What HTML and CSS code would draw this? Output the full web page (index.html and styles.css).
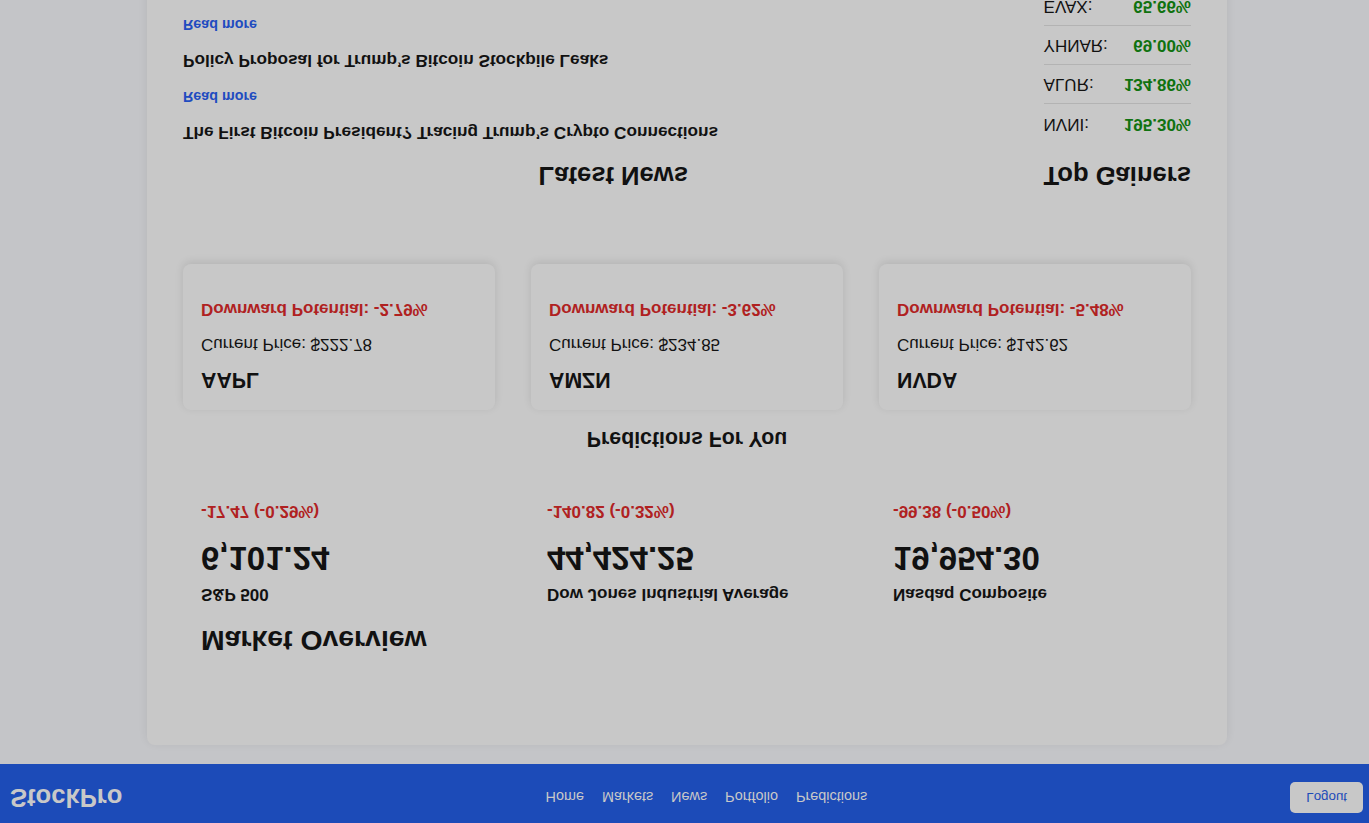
FILE: index.html
```html
<!DOCTYPE html>
<html lang="en">
<head>
<meta charset="utf-8">
<title>StockPro</title>
<link rel="stylesheet" href="styles.css">
</head>
<body>
<div class="screen">
  <header class="topbar">
    <div class="logo">StockPro</div>
    <nav class="nav">
      <a href="#">Home</a>
      <a href="#">Markets</a>
      <a href="#">News</a>
      <a href="#">Portfolio</a>
      <a href="#">Predictions</a>
    </nav>
    <button class="logout" type="button">Logout</button>
  </header>

  <main class="panel">
    <section class="market">
      <h2 class="market-title">Market Overview</h2>
      <div class="indices">
        <div class="index">
          <div class="index-name">S&amp;P 500</div>
          <div class="index-value">6,101.24</div>
          <div class="index-change">-17.47 (-0.29%)</div>
        </div>
        <div class="index">
          <div class="index-name">Dow Jones Industrial Average</div>
          <div class="index-value">44,424.25</div>
          <div class="index-change">-140.82 (-0.32%)</div>
        </div>
        <div class="index">
          <div class="index-name">Nasdaq Composite</div>
          <div class="index-value">19,954.30</div>
          <div class="index-change">-99.38 (-0.50%)</div>
        </div>
      </div>
    </section>

    <section class="predictions">
      <h3 class="pred-title">Predictions For You</h3>
      <div class="pred-grid">
        <div class="pred-card">
          <div class="pred-symbol">AAPL</div>
          <div class="pred-price">Current Price: $222.78</div>
          <div class="pred-potential">Downward Potential: -2.79%</div>
        </div>
        <div class="pred-card">
          <div class="pred-symbol">AMZN</div>
          <div class="pred-price">Current Price: $234.85</div>
          <div class="pred-potential">Downward Potential: -3.62%</div>
        </div>
        <div class="pred-card">
          <div class="pred-symbol">NVDA</div>
          <div class="pred-price">Current Price: $142.62</div>
          <div class="pred-potential">Downward Potential: -5.48%</div>
        </div>
      </div>
    </section>

    <div class="bottom">
      <section class="news">
        <h2 class="col-title">Latest News</h2>
        <article class="news-item">
          <div class="news-title">The First Bitcoin President? Tracing Trump’s Crypto Connections</div>
          <a class="read-more" href="#">Read more</a>
        </article>
        <article class="news-item">
          <div class="news-title">Policy Proposal for Trump’s Bitcoin Stockpile Leaks</div>
          <a class="read-more" href="#">Read more</a>
        </article>
      </section>
      <aside class="gainers">
        <h2 class="col-title">Top Gainers</h2>
        <ul class="gainer-list">
          <li class="gainer"><span>NVNI:</span><span class="gain">195.30%</span></li>
          <li class="gainer"><span>ALUR:</span><span class="gain">134.86%</span></li>
          <li class="gainer"><span>YHNAR:</span><span class="gain">69.00%</span></li>
          <li class="gainer"><span>EVAX:</span><span class="gain">65.66%</span></li>
        </ul>
      </aside>
    </div>
  </main>
</div>
</body>
</html>
```

FILE: styles.css
```css
html, body {
  margin: 0;
  padding: 0;
  background: #c4c5c8;
}

body {
  font-family: "Liberation Sans", Arial, sans-serif;
  color: #111;
}

.screen {
  height: 100vh;
  overflow: hidden;
  transform: scaleY(-1);
  background: #c4c5c8;
}

/* Header */
.topbar {
  display: flex;
  justify-content: space-between;
  align-items: center;
  background: #1c4bb8;
  padding: 10px 6px 18px 10px;
}

.logo {
  font-size: 25.6px;
  font-weight: 700;
  line-height: 1.2;
  color: #c8c8c8;
}

.nav {
  display: flex;
  gap: 18px;
}

.nav a {
  font-size: 14.4px;
  color: #c8c8c8;
  text-decoration: none;
}

.logout {
  font-family: "Liberation Sans", Arial, sans-serif;
  font-size: 13.333px;
  line-height: 15px;
  color: #1c4bb8;
  background: #c8c8c8;
  border: none;
  border-radius: 5px;
  padding: 8px 16px;
}

/* Main panel */
.panel {
  width: 1080px;
  box-sizing: border-box;
  margin: 19px 0 0 calc(50% - 537.5px);
  padding: 36px;
  background: #c8c8c8;
  border-radius: 8px;
  box-shadow: 0 2px 10px rgba(0, 0, 0, 0.08);
}

/* Market overview */
.market {
  padding: 51px 18px 18px;
  margin-bottom: 31.4px;
}

.market-title {
  margin: 0 0 19.6px;
  font-size: 28.4px;
  font-weight: 700;
  line-height: 1.2;
}

.indices {
  display: grid;
  grid-template-columns: repeat(3, 1fr);
  column-gap: 66px;
}

.index-name {
  font-size: 17px;
  font-weight: 700;
  line-height: 1.2;
  margin-bottom: 5.8px;
}

.index-value {
  font-size: 33px;
  font-weight: 700;
  line-height: 1.2;
  margin-bottom: 17.5px;
}

.index-change {
  font-size: 17px;
  font-weight: 700;
  line-height: 1.2;
  color: #b02121;
}

/* Predictions */
.pred-title {
  margin: 0 0 16px;
  text-align: center;
  font-size: 21.3px;
  font-weight: 700;
  line-height: 1.2;
}

.pred-grid {
  display: grid;
  grid-template-columns: repeat(3, 1fr);
  gap: 36px;
}

.pred-card {
  background: #c8c8c8;
  border-radius: 8px;
  box-shadow: 0 2px 8px rgba(0, 0, 0, 0.1);
  padding: 17.5px 18px 35px;
}

.pred-symbol {
  font-size: 21.3px;
  font-weight: 700;
  line-height: 1.2;
  margin-bottom: 12.4px;
}

.pred-price {
  font-size: 17px;
  line-height: 1.2;
  margin-bottom: 14.6px;
}

.pred-potential {
  font-size: 17px;
  font-weight: 700;
  line-height: 1.2;
  color: #b02121;
}

/* News + gainers */
.bottom {
  display: flex;
  align-items: flex-start;
  margin-top: 72.5px;
}

.news {
  flex: 1;
}

.col-title {
  margin: 0 0 18px;
  text-align: center;
  font-size: 25.6px;
  font-weight: 700;
  line-height: 1.2;
}

.news-item {
  margin-bottom: 17.8px;
}

.news-title {
  font-size: 17.2px;
  font-weight: 700;
  line-height: 1.2;
  margin-bottom: 16.6px;
}

.read-more {
  display: block;
  font-size: 14.3px;
  font-weight: 700;
  line-height: 1.2;
  color: #1f4cc0;
  text-decoration: none;
}

.gainers {
  flex: none;
}

.gainer-list {
  list-style: none;
  margin: 0;
  padding: 0;
}

.gainer {
  display: flex;
  justify-content: space-between;
  padding: 9px 0;
  border-bottom: 1px solid #b3b3b3;
  font-size: 17px;
  line-height: 1.2;
}

.gain {
  font-weight: 700;
  color: #0f720f;
}
```
